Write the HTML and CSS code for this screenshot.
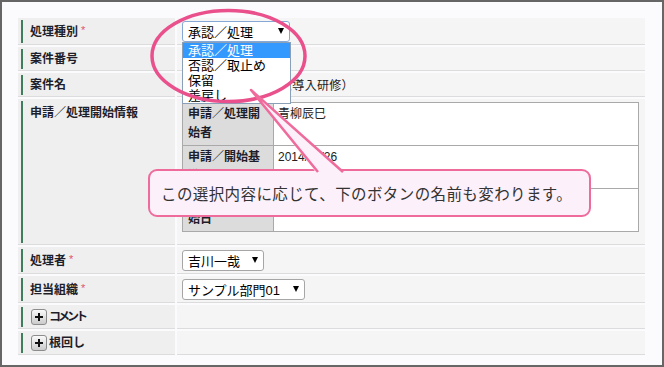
FILE: index.html
```html
<!DOCTYPE html>
<html lang="ja">
<head>
    <meta charset="UTF-8">
    <title>処理画面</title>
    <link rel="stylesheet" href="styles.css">
</head>
<body>
    <div class="frame">
        <div class="form">
            <!-- 処理種別 -->
            <div class="lbl"><span class="bar">処理種別<em class="req">*</em></span></div>
            <div class="val">
                <div class="sel sel-focus w-kind">承認／処理<i class="arrow"></i>
                    <ul class="drop">
                        <li class="on">承認／処理</li>
                        <li>否認／取止め</li>
                        <li>保留</li>
                        <li>差戻し</li>
                    </ul>
                </div>
            </div>

            <div class="lbl"><span class="bar">案件番号</span></div>
            <div class="val"></div>

            <div class="lbl"><span class="bar">案件名</span></div>
            <div class="val"><span class="txt">社内研修（システム導入研修）</span></div>

            <!-- 申請情報 -->
            <div class="lbl"><span class="bar bar-top">申請／処理開始情報</span></div>
            <div class="val val-top">
                <table class="sub">
                    <tr><th>申請／処理開始者</th><td>青柳辰巳</td></tr>
                    <tr><th>申請／開始基準日</th><td>2014/11/26</td></tr>
                    <tr><th>申請／処理開始日</th><td>2014/11/26</td></tr>
                </table>
            </div>

            <div class="lbl"><span class="bar">処理者<em class="req">*</em></span></div>
            <div class="val"><div class="sel w-user">吉川一哉<i class="arrow"></i></div></div>

            <div class="lbl"><span class="bar">担当組織<em class="req">*</em></span></div>
            <div class="val"><div class="sel w-org">サンプル部門01<i class="arrow"></i></div></div>

            <div class="lbl"><span class="bar"><i class="plus"></i><span class="narrow">コメント</span></span></div>
            <div class="val"></div>

            <div class="lbl"><span class="bar"><i class="plus"></i>根回し</span></div>
            <div class="val"></div>
        </div>

        <!-- annotation -->
        <div class="callout">この選択内容に応じて、下のボタンの名前も変わります。</div>
        <svg class="marks" width="664" height="367" viewBox="0 0 664 367">
            <ellipse cx="228.5" cy="56" rx="76.5" ry="45.5" fill="none" stroke="#e9508c" stroke-width="3.5"/>
            <polygon points="251,90 318,175 346,175" fill="#fcf0fa"/>
            <polyline points="318,172 251,90 343,172" fill="none" stroke="#ee6b9c" stroke-width="2.5" stroke-linejoin="round"/>
        </svg>
    </div>
</body>
</html>
```

FILE: styles.css
```css
/* page */
body {
    margin: 0;
    font-family: "Liberation Sans", "Noto Sans CJK JP", sans-serif;
    color: #222;
}

.frame {
    position: relative;
    width: 664px;
    height: 367px;
    box-sizing: border-box;
    border: 2px solid #666;
    background-color: #fbfbfd;
    padding: 16px 0 0 16px;
}

/* form grid */
.form {
    display: grid;
    grid-template-columns: 157px 468px;
    grid-template-rows: 27px 24px 24px 146px 27px 27px 24px 24px;
    gap: 2px;
}

.lbl {
    background-color: #efefef;
    border-bottom: 1px solid #dcdcdc;
    padding: 2px 0 1px 3px;
    box-sizing: border-box;
}

.bar {
    display: flex;
    align-items: center;
    height: 100%;
    box-sizing: border-box;
    border-left: 2px solid #3f7d5c;
    padding-left: 7px;
    font-size: 12px;
    line-height: 16px;
    font-weight: bold;
    color: #1e1e2a;
}

.bar-top {
    align-items: flex-start;
    padding-top: 4px;
}

.req {
    font-style: normal;
    font-weight: normal;
    color: #e2546a;
    font-size: 11px;
    margin: -3px 0 0 3px;
}

.val {
    background-color: #f5f5f5;
    border-bottom: 1px solid #dcdcdc;
    box-sizing: border-box;
    padding-left: 5px;
    display: flex;
    align-items: center;
}

.val-top {
    align-items: flex-start;
    padding-top: 3px;
}

.txt {
    font-size: 12px;
    letter-spacing: 0.3px;
}

/* fake selects */
.sel {
    position: relative;
    display: flex;
    align-items: center;
    height: 21px;
    box-sizing: border-box;
    border: 1px solid #a6a6a6;
    border-radius: 3px;
    background-color: #fff;
    padding: 0 5px;
    font-size: 13px;
    color: #000;
}

.sel-focus {
    border-color: #86a8d6;
}

.w-kind { width: 108px; }
.w-user { width: 82px; }
.w-org { width: 123px; }

.arrow {
    margin-left: auto;
    width: 0;
    height: 0;
    border-left: 3.5px solid transparent;
    border-right: 3.5px solid transparent;
    border-top: 6px solid #000;
}

.drop {
    position: absolute;
    top: 20px;
    left: -1px;
    width: 109px;
    box-sizing: border-box;
    margin: 0;
    padding: 0;
    list-style: none;
    border: 1px solid #8a9fb8;
    background-color: #fff;
    z-index: 1;
}

.drop li {
    height: 15px;
    line-height: 15px;
    padding-left: 5px;
}

.drop .on {
    background-color: #3399ff;
    color: #fff;
}

/* nested info table */
.sub {
    border-collapse: collapse;
    width: 457px;
    font-size: 12px;
    line-height: 19px;
}

.sub tr {
    height: 43px;
}

.sub th {
    width: 77px;
    background-color: #dcdcdc;
    border: 1px solid #a9a9a9;
    padding: 2px 8px 0 5px;
    text-align: left;
    vertical-align: top;
    color: #1e1e2a;
}

.sub td {
    background-color: #fff;
    border: 1px solid #a9a9a9;
    padding: 2px 4px 0;
    vertical-align: top;
    color: #222;
}

/* expand buttons */
.plus {
    position: relative;
    width: 16px;
    height: 16px;
    box-sizing: border-box;
    border: 1px solid #8c8c8c;
    border-radius: 3px;
    background: linear-gradient(#fafafa, #cbcbcb);
    margin: 0 2px 0 1px;
}

.plus::before,
.plus::after {
    content: "";
    position: absolute;
    background-color: #111;
}

.plus::before {
    left: 3px;
    top: 6px;
    width: 8px;
    height: 2px;
}

.plus::after {
    left: 6px;
    top: 3px;
    width: 2px;
    height: 8px;
}

.narrow {
    letter-spacing: -3px;
}

/* annotation */
.callout {
    position: absolute;
    left: 146px;
    top: 167px;
    width: 443px;
    height: 48px;
    box-sizing: border-box;
    border: 2.5px solid #ee6b9c;
    border-radius: 9px;
    background-color: #fcf0fa;
    padding-left: 11px;
    display: flex;
    align-items: center;
    font-size: 15.5px;
    letter-spacing: 0.4px;
    color: #333;
    z-index: 2;
}

.marks {
    position: absolute;
    left: -2px;
    top: -2px;
    z-index: 3;
    pointer-events: none;
}
```
